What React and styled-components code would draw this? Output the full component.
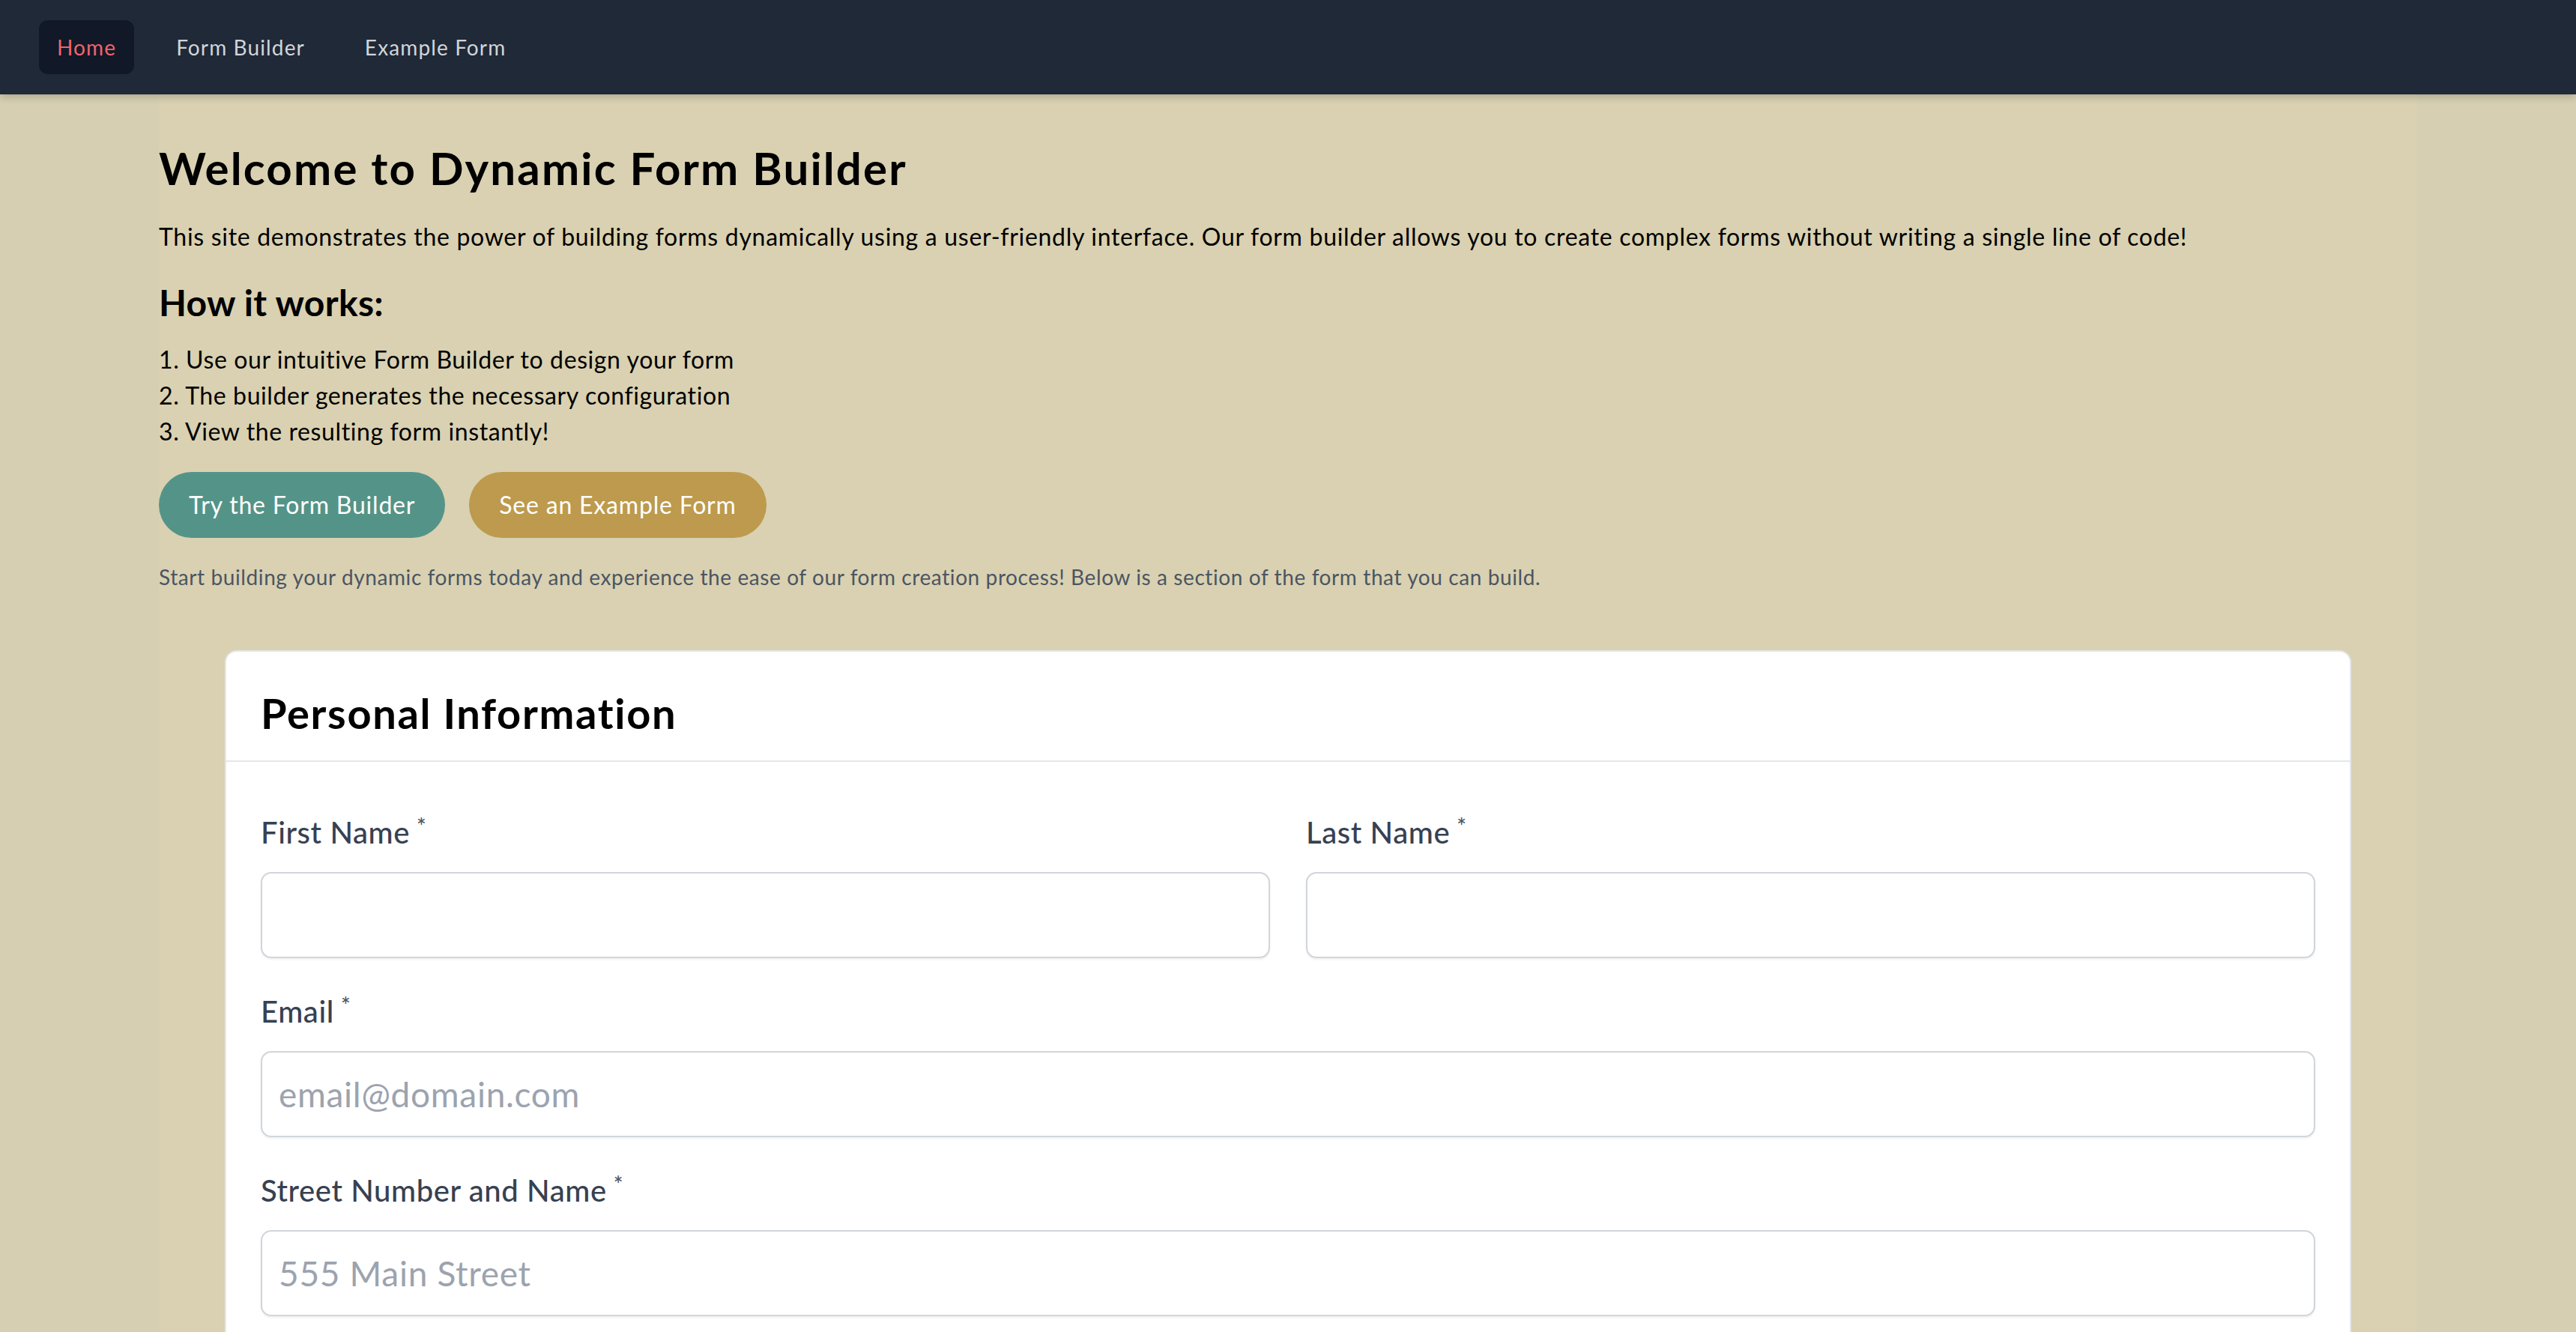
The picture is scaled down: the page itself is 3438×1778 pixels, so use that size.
import React from "react";
import styled, { createGlobalStyle } from "styled-components";

const GlobalStyle = createGlobalStyle`
  html, body {
    margin: 0;
    padding: 0;
    background: #d6cfb2;
    font-family: Lato, "Open Sans", sans-serif;
    scrollbar-width: none;
  }
  ::-webkit-scrollbar {
    display: none;
  }
  * {
    box-sizing: border-box;
  }
`;

const Nav = styled.nav`
  height: 126px;
  background: #1f2937;
  display: flex;
  align-items: center;
  gap: 32px;
  padding-left: 52px;
  box-shadow: 0 4px 10px rgba(0, 0, 0, 0.18);
  position: relative;
`;

const NavLink = styled.a`
  padding: 16px 24px;
  font-size: 28px;
  line-height: 40px;
  letter-spacing: 0.04em;
  border-radius: 12px;
  text-decoration: none;
  color: ${(p) => (p.$active ? "#f0646c" : "#d1d5db")};
  background: ${(p) => (p.$active ? "#111827" : "transparent")};
`;

const Main = styled.main`
  max-width: 3014px;
  margin: 0 auto;
  background: #d9d1b1;
  padding-top: 62px;
  padding-bottom: 80px;
`;

const Title = styled.h1`
  margin: 0;
  font-size: 60px;
  line-height: 72px;
  font-weight: 700;
  letter-spacing: 0.036em;
  color: #000;
`;

const Intro = styled.p`
  margin: 32px 0 0;
  font-size: 32px;
  line-height: 48px;
  letter-spacing: 0.7px;
  color: #000;
`;

const SubTitle = styled.h2`
  margin: 32px 0 0;
  font-size: 48px;
  line-height: 64px;
  font-weight: 700;
  letter-spacing: 0.3px;
  color: #000;
`;

const Steps = styled.ol`
  margin: 20px 0 0;
  padding: 0;
  list-style: none;
  font-size: 32px;
  line-height: 48px;
  letter-spacing: 0.6px;
  color: #000;
`;

const Actions = styled.div`
  display: flex;
  gap: 32px;
  margin-top: 30px;
`;

const Pill = styled.button`
  border: none;
  border-radius: 9999px;
  padding: 20px 40px;
  font-family: inherit;
  font-size: 32px;
  line-height: 48px;
  letter-spacing: 0.8px;
  color: #fff;
  background: ${(p) => (p.$tone === "gold" ? "#bd9a4d" : "#549488")};
  cursor: pointer;
`;

const Note = styled.p`
  margin: 32px 0 0;
  font-size: 28px;
  line-height: 40px;
  letter-spacing: 0.6px;
  color: #4b5563;
`;

const Card = styled.section`
  max-width: 2838px;
  margin: 78px auto 0;
  background: #fff;
  border: 2px solid #e5e7eb;
  border-radius: 16px;
`;

const CardHeader = styled.div`
  padding: 48px 46px 30px;
  border-bottom: 2px solid #e5e7eb;
`;

const CardTitle = styled.h3`
  margin: 0;
  font-size: 56px;
  line-height: 67px;
  font-weight: 700;
  letter-spacing: 0.03em;
  color: #000;
`;

const CardBody = styled.div`
  padding: 66px 46px 60px;
  display: grid;
  grid-template-columns: 1fr 1fr;
  column-gap: 48px;
  row-gap: 43px;
`;

const Field = styled.div`
  display: flex;
  flex-direction: column;
  grid-column: ${(p) => (p.$wide ? "1 / -1" : "auto")};
`;

const Label = styled.label`
  font-size: 40px;
  line-height: 56px;
  font-weight: 500;
  letter-spacing: 0.6px;
  color: #374151;
  margin-bottom: 25px;
`;

const Required = styled.span`
  font-size: 30px;
  line-height: 38px;
  color: #4b5563;
  margin-left: 9px;
  vertical-align: top;
`;

const Input = styled.input`
  height: 115px;
  border: 2px solid #d1d5db;
  border-radius: 14px;
  box-shadow: 0 2px 3px rgba(0, 0, 0, 0.06);
  padding: 0 22px;
  font-family: inherit;
  font-size: 46px;
  letter-spacing: 0.7px;
  color: #111827;
  background: #fff;
  outline: none;

  &::placeholder {
    color: #9ca3af;
  }
`;

const fields = [
  { label: "First Name", placeholder: "" },
  { label: "Last Name", placeholder: "" },
  { label: "Email", placeholder: "email@domain.com", wide: true },
  { label: "Street Number and Name", placeholder: "555 Main Street", wide: true },
  { label: "City", placeholder: "Springfield" },
  { label: "State", placeholder: "IL" },
];

export default function App() {
  return (
    <>
      <GlobalStyle />
      <Nav>
        <NavLink href="#" $active>Home</NavLink>
        <NavLink href="#">Form Builder</NavLink>
        <NavLink href="#">Example Form</NavLink>
      </Nav>
      <Main>
        <Title>Welcome to Dynamic Form Builder</Title>
        <Intro>
          This site demonstrates the power of building forms dynamically using a user-friendly
          interface. Our form builder allows you to create complex forms without writing a single
          line of code!
        </Intro>
        <SubTitle>How it works:</SubTitle>
        <Steps>
          <li>1. Use our intuitive Form Builder to design your form</li>
          <li>2. The builder generates the necessary configuration</li>
          <li>3. View the resulting form instantly!</li>
        </Steps>
        <Actions>
          <Pill>Try the Form Builder</Pill>
          <Pill $tone="gold">See an Example Form</Pill>
        </Actions>
        <Note>
          Start building your dynamic forms today and experience the ease of our form creation
          process! Below is a section of the form that you can build.
        </Note>
        <Card>
          <CardHeader>
            <CardTitle>Personal Information</CardTitle>
          </CardHeader>
          <CardBody>
            {fields.map((f) => (
              <Field key={f.label} $wide={f.wide}>
                <Label>
                  {f.label}
                  <Required>*</Required>
                </Label>
                <Input placeholder={f.placeholder} />
              </Field>
            ))}
          </CardBody>
        </Card>
      </Main>
    </>
  );
}
